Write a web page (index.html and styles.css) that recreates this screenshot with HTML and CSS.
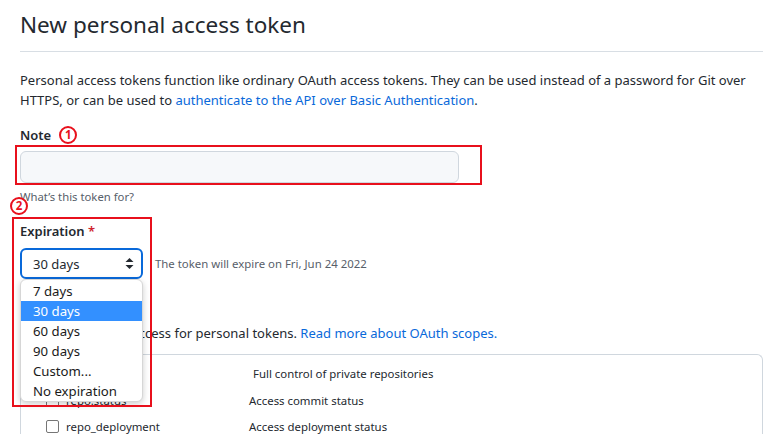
FILE: index.html
```html
<!DOCTYPE html>
<html>
<head>
<meta charset="utf-8">
<link rel="stylesheet" href="styles.css">
</head>
<body>
<main class="page">
  <h1 class="title">New personal access token</h1>
  <p class="intro">Personal access tokens function like ordinary OAuth access tokens. They can be used instead of a password for Git over<br>HTTPS, or can be used to <a href="#" class="link">authenticate to the API over Basic Authentication</a>.</p>

  <div class="note-group">
    <div class="label-row"><span class="label">Note</span><span class="marker marker-1">1</span></div>
    <div class="input"></div>
    <div class="annot annot-note"></div>
    <p class="hint">What’s this token for?</p>
    <span class="marker marker-2">2</span>
  </div>

  <div class="exp-group">
    <div class="label">Expiration <span class="req">*</span></div>
    <div class="exp-row">
      <div class="select">
        <span>30 days</span>
        <svg class="updown" width="9" height="13" viewBox="0 0 9 13"><path d="M4.5 1 L8.5 5 L0.5 5 Z M4.5 12 L8.5 8 L0.5 8 Z" fill="#24292f"/></svg>
      </div>
      <span class="exp-note">The token will expire on Fri, Jun 24 2022</span>
    </div>
    <ul class="menu">
      <li>7 days</li>
      <li class="active">30 days</li>
      <li>60 days</li>
      <li>90 days</li>
      <li>Custom...</li>
      <li>No expiration</li>
    </ul>
    <div class="annot annot-exp"></div>
  </div>

  <p class="scopes">Scopes define the access for personal tokens. <a href="#" class="link">Read more about OAuth scopes.</a></p>

  <div class="table">
    <div class="row row-main"><span class="cb"></span><span class="name">repo</span><span class="desc desc-main">Full control of private repositories</span></div>
    <div class="row row-sub"><span class="cb"></span><span class="name">repo:status</span><span class="desc">Access commit status</span></div>
    <div class="row row-sub"><span class="cb"></span><span class="name">repo_deployment</span><span class="desc">Access deployment status</span></div>
  </div>
</main>
</body>
</html>
```
FILE: styles.css
```css
* { box-sizing: border-box; }
html, body { margin: 0; padding: 0; background: #fff; }
body {
  font-family: "Noto Sans", "Open Sans", "Liberation Sans", sans-serif;
  color: #24292f;
  font-size: 13px;
  overflow: hidden;
  height: 434px;
}
.page { padding: 0 8px 0 20px; }
.title {
  margin: 0;
  padding: 10px 0 11px;
  font-size: 22.5px;
  font-weight: 400;
  line-height: 30px;
  border-bottom: 1px solid #d8dee4;
}
.intro {
  margin: 18px 0 0;
  font-size: 13px;
  line-height: 20px;
  white-space: nowrap;
}
.link { color: #0969da; text-decoration: none; }

.note-group { position: relative; margin-top: 15px; }
.label-row { display: flex; align-items: center; height: 20px; }
.label { font-weight: 600; font-size: 13px; line-height: 20px; }
.marker {
  display: inline-flex; align-items: center; justify-content: center;
  width: 18px; height: 18px; border: 2px solid #e8101c; border-radius: 50%;
  color: #e8101c; font-size: 11.5px; font-weight: 700; line-height: 1;
  background: #fff;
}
.marker-1 { margin-left: 8px; }
.marker-2 { position: absolute; left: -10px; top: 72px; }
.input {
  margin-top: 6px;
  width: 439px; height: 32px;
  background: #f6f8fa;
  border: 1px solid #d0d7de;
  border-radius: 6px;
}
.hint { margin: 5px 0 0; font-size: 11.3px; line-height: 18px; color: #57606a; }
.annot { position: absolute; border: 2px solid #e8101c; pointer-events: none; }
.annot-note { left: -5px; top: 20px; width: 467px; height: 40px; }

.exp-group { position: relative; margin-top: 15px; }
.req { color: #cf222e; }
.exp-row { display: flex; align-items: center; margin-top: 7px; }
.select {
  width: 123px; height: 31px;
  border: 2px solid #0969da; border-radius: 6px;
  display: flex; align-items: center; justify-content: space-between;
  padding: 0 7px 0 11px;
  font-size: 13px;
}
.exp-note { margin-left: 12px; font-size: 11.4px; color: #57606a; }
.menu {
  position: absolute; left: 0; top: 58px;
  margin: 0; padding: 1px 0 0;
  list-style: none;
  width: 123px;
  background: #fff;
  border: 1px solid #d6d6d6;
  border-radius: 6px;
  box-shadow: 0 2px 6px rgba(0,0,0,0.2);
  z-index: 5;
  overflow: hidden;
}
.menu li { height: 20px; line-height: 20px; padding-left: 12px; font-size: 13.2px; color: #1a1a1a; }
.menu li.active { background: #3390ff; color: #fff; }
.annot-exp { left: -8px; top: -4px; width: 140px; height: 190px; z-index: 6; }

.scopes { margin: 44px 0 0; line-height: 20px; font-size: 13px; }
.table {
  margin-top: 11px;
  border: 1px solid #d0d7de;
  border-bottom: none;
  border-radius: 6px 6px 0 0;
  height: 90px;
  padding-top: 5px;
}
.row { display: flex; align-items: center; height: 26px; font-size: 11.4px; }
.row-main { height: 27px; }
.cb {
  width: 13px; height: 13px;
  border: 1px solid #767676; border-radius: 2px; background: #fff;
  flex: none;
}
.row-main { padding-left: 5px; }
.row-main .name { width: 202px; margin-left: 6px; }
.row-sub { padding-left: 25px; }
.row-sub .name { width: 183px; margin-left: 7px; }
.desc { color: #24292f; }
.desc-main { margin-left: 6px; }
```
